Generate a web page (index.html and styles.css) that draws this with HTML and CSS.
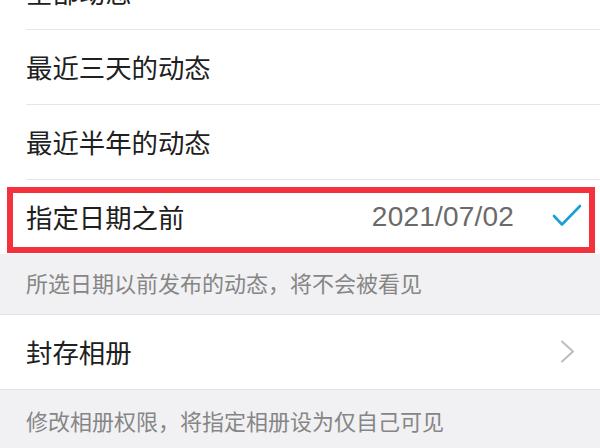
FILE: index.html
```html
<!DOCTYPE html>
<html lang="zh-CN">
<head>
<meta charset="utf-8">
<link rel="stylesheet" href="styles.css">
</head>
<body>
<div class="page">
  <div class="group group-first">
    <div class="row"><span class="label">全部动态</span></div>
    <div class="row"><span class="label">最近三天的动态</span></div>
    <div class="row"><span class="label">最近半年的动态</span></div>
    <div class="row row-last">
      <span class="label">指定日期之前</span>
      <span class="value">2021/07/02</span>
      <svg class="check" width="30" height="24" viewBox="0 0 30 24"><polyline points="2,12 10,20.5 28,2" fill="none" stroke="#1b9fd6" stroke-width="2.6" stroke-linecap="round" stroke-linejoin="round"/></svg>
      <div class="highlight"></div>
    </div>
  </div>
  <div class="note note-first">所选日期以前发布的动态，将不会被看见</div>
  <div class="group">
    <div class="row row-last">
      <span class="label">封存相册</span>
      <svg class="chevron" width="16" height="24" viewBox="0 0 16 24"><polyline points="2,1.5 13,11.5 2,21.5" fill="none" stroke="#bdbdbd" stroke-width="2" stroke-linecap="round" stroke-linejoin="round"/></svg>
    </div>
  </div>
  <div class="note">修改相册权限，将指定相册设为仅自己可见</div>
</div>
</body>
</html>
```

FILE: styles.css
```css
html, body {
  margin: 0;
  padding: 0;
  background: #f1f1f3;
  overflow: hidden;
}
.page {
  width: 600px;
  height: 448px;
  overflow: hidden;
  font-family: "Noto Sans CJK SC", "Noto Sans", sans-serif;
}
.group {
  background: #ffffff;
  border-bottom: 1px solid #e2e2e4;
}
.group-first {
  margin-top: -45px;
  border-bottom: none;
}
.row {
  position: relative;
  height: 74px;
  margin-left: 26px;
  padding-right: 18px;
  display: flex;
  align-items: center;
  border-bottom: 1px solid #e6e6e8;
}
.row-last {
  border-bottom: none;
}
.label {
  font-size: 26.4px;
  color: #202020;
  line-height: 30px;
  flex: 1;
}
.value {
  font-family: "Liberation Sans", "Noto Sans", sans-serif;
  font-size: 28px;
  color: #6a6a6a;
  margin-right: 38px;
  letter-spacing: 0.2px;
}
.check {
  display: block;
  margin-top: -2px;
}
.chevron {
  display: block;
  margin-right: 6px;
}
.highlight {
  position: absolute;
  left: -19px;
  right: 5px;
  top: 7px;
  bottom: 1px;
  border: 6px solid #f3323e;
  pointer-events: none;
}
.note {
  height: 60px;
  padding-left: 26px;
  display: flex;
  align-items: center;
  font-size: 22px;
  color: #868686;
  border-bottom: 1px solid #e2e2e4;
}
.note-first {
  padding-bottom: 4px;
  height: 56px;
}
.note:last-child {
  border-bottom: none;
}
```
